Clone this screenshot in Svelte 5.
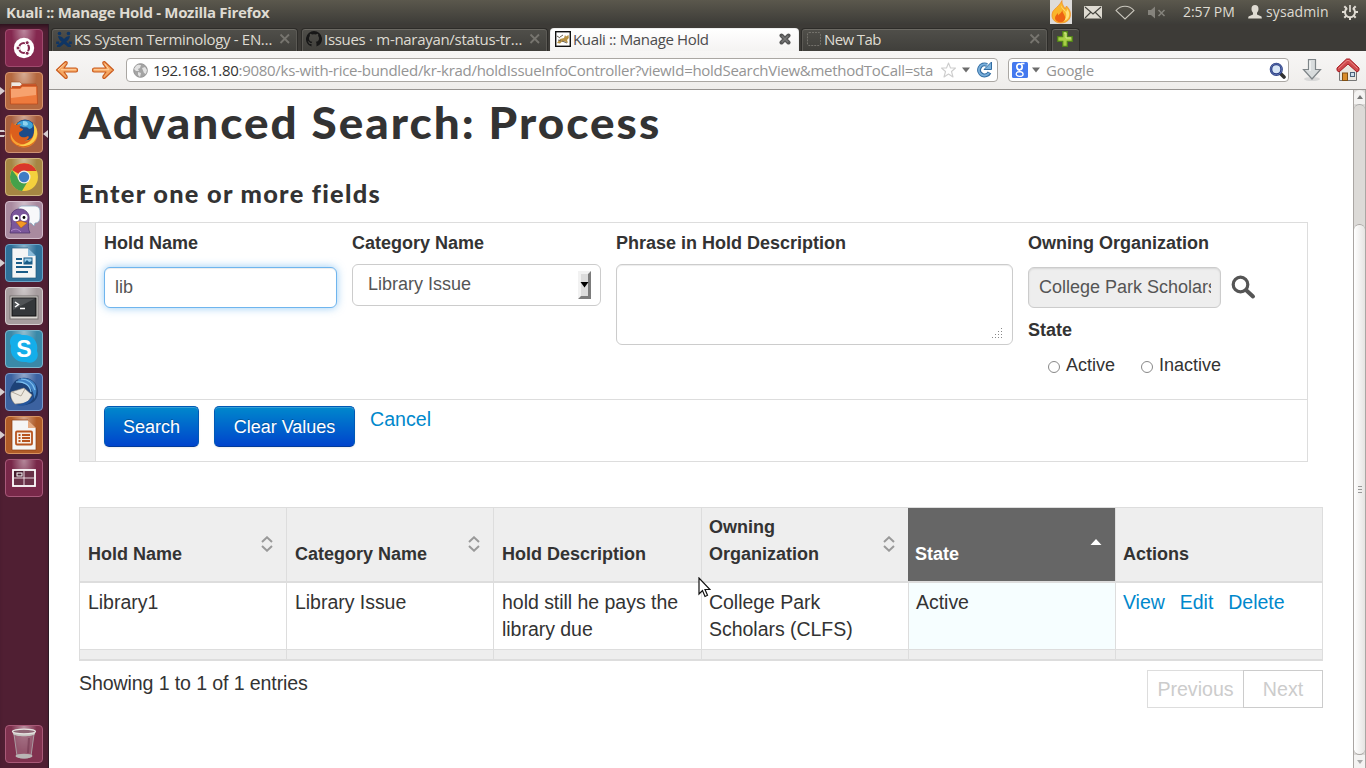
<script>
  const tabs = [
    { title: 'KS System Terminology - EN…', icon: 'jira', width: 247, spacing: -0.32 },
    { title: 'Issues · m-narayan/status-tr…', icon: 'github', width: 247, spacing: -0.3 },
    { title: 'Kuali :: Manage Hold', icon: 'kuali', width: 249, spacing: -0.36, active: true },
    { title: 'New Tab', icon: 'blank', width: 247, spacing: -0.6 }
  ];
  const apps = [
    { name: 'dash', tint: '#84284f', edge: '#a04a6e' },
    { name: 'files', tint: '#b5683f', edge: '#d79670', running: 1 },
    { name: 'firefox', tint: '#a9603f', edge: '#cf9373', running: 2, focused: true },
    { name: 'chrome', tint: '#a68643', edge: '#ceb47c' },
    { name: 'pidgin', tint: '#a98a9f', edge: '#d3bccb' },
    { name: 'writer', tint: '#2f7099', edge: '#6ba4c6', running: 1 },
    { name: 'terminal', tint: '#a79d9f', edge: '#d5cdcf' },
    { name: 'skype', tint: '#3a89a8', edge: '#7db7cd' },
    { name: 'thunderbird', tint: '#3c62a0', edge: '#7c9ccc', running: 1 },
    { name: 'impress', tint: '#b05b27', edge: '#d79360', running: 1 },
    { name: 'workspaces', tint: '#782849', edge: '#a8597a' },
    { name: 'trash', tint: '#80324f', edge: '#a95a78' }
  ];
  const columns = [
    { label: 'Hold Name', sort: true },
    { label: 'Category Name', sort: true },
    { label: 'Hold Description' },
    { label: 'Owning Organization', sort: true, tight: true },
    { label: 'State', sorted: true, tight: true },
    { label: 'Actions', tight: true }
  ];
</script>

<div class="screen">
  <header class="panel">
    <span class="title">Kuali :: Manage Hold - Mozilla Firefox</span>
    <div class="tray">
      <svg class="flame" width="22" height="24" viewBox="0 0 22 24">
        <rect width="22" height="24" fill="#dedcda" />
        <path d="M12 .5c-.5 4 2 5.500 3 8.500l1.500-3C19.500 9 20.500 11.500 20.500 14.500c0 5-4 8.500-9.500 8.500S1.500 19.500 2 14.500C2.400 10 6 8.500 8.500 5.500 10 4 11 2.500 12 .5z" fill="#f9b62d" stroke="#f08a21" stroke-width=".7" />
        <path d="M11 5c-1 3 4 5 5 8 .7 3 0 6-2.500 8 5-1 6.500-5 5.500-9l-1.500-3-1.500 3C15 9 11.500 8 11 5z" fill="#ffe07a" />
        <path d="M12.500 10c-.5 3 2.700 4.500 2.700 8 0 2.500-2 4.300-4.700 4.300S5 20.500 5 18c0-2.500 1.800-3.500 3-5v2.500c1.500-1.500 3.500-3 4.500-5.500z" fill="#ee6413" />
      </svg>
      <svg class="mail" width="18" height="13" viewBox="0 0 18 13"><rect width="18" height="12.500" rx=".8" fill="#dfdbd2" /><path d="M1 1l8 7 8-7M1 12l6-6M17 12l-6-6" fill="none" stroke="#45443e" stroke-width="1.100" /></svg>
      <svg class="wifi" width="20" height="15" viewBox="0 0 20 15"><path d="M1 5.500C6-.2 14-.2 19 5.500L10 14z" fill="none" stroke="#c9c6bd" stroke-width="1.100" /></svg>
      <svg class="mute" width="18" height="13" viewBox="0 0 18 13"><path d="M0 4h3l4-3.500v12L3 9H0z" fill="#85837c" /><path d="M10.500 4l6 6M16.500 4l-6 6" stroke="#85837c" stroke-width="1.500" /></svg>
      <span class="clock">2:57 PM</span>
      <svg class="user" width="14" height="14" viewBox="0 0 14 14"><path d="M7 0c2.300 0 3.500 1.500 3.500 4 0 1.700-.8 3-1.500 3.800V9.500l4 1.700c.6.300.8 1 .8 2.300H.2c0-1.300.2-2 .8-2.300l4-1.700V7.800C4.300 7 3.500 5.700 3.500 4 3.500 1.500 4.700 0 7 0z" fill="#dfdbd2" /></svg>
      <span class="username">sysadmin</span>
      <svg class="gear" width="16" height="16" viewBox="0 0 16 16" fill="none" stroke="#dfdbd2"><path d="M5.200 4.200a5 5 0 1 0 5.600 0" stroke-width="2" /><path d="M8 1v7" stroke-width="1.700" /><path d="M0 8h3M13 8h3M8 13v3M2.300 2.300l2.200 2.200M13.700 2.300l-2.200 2.200M2.300 13.700l2.200-2.200M13.700 13.700l-2.200-2.200" stroke-width="2" /></svg>
    </div>
  </header>

  <div class="desktop">
    <aside class="launcher">
      {#each apps as app}
        <div class="slot" class:last={app.name === 'trash'}>
          {#if app.running === 1}<svg class="pip" width="5" height="8" viewBox="0 0 5 8"><path d="M0 0l5 4-5 4z" fill="#d6cdd0" /></svg>{/if}
          {#if app.running === 2}<svg class="pip" width="5" height="8" viewBox="0 0 5 8"><path d="M0 0h4l1 2H0zM0 5h5l-1 2H0z" fill="#d6cdd0" /></svg>{/if}
          {#if app.focused}<svg class="pip focus" width="5" height="8" viewBox="0 0 5 8"><path d="M5 0L0 4l5 4z" fill="#d6cdd0" /></svg>{/if}
          <div class="tile" style="background-color:{app.tint};border-color:{app.edge}">
            <svg width="36" height="36" viewBox="0 0 36 36">
              {#if app.name === 'dash'}
                <circle cx="18" cy="18" r="10.200" fill="#fff" /><circle cx="18" cy="18" r="5" fill="none" stroke="#84284f" stroke-width="2.200" />
                <g fill="#84284f" stroke="#fff" stroke-width="1"><circle cx="12" cy="18" r="2" /><circle cx="21.200" cy="12.700" r="2" /><circle cx="21.200" cy="23.300" r="2" /></g>
              {:else if app.name === 'files'}
                <path d="M5 30V9h9l2 2h14v19z" fill="#eee9e3" stroke="#a34e20" stroke-width=".6" />
                <path d="M6 13h8l2-2h14v4H6z" fill="#c9562a" />
                <path d="M4 15h10l2-2h15l.5 18H4.500z" fill="#ee7a3d" stroke="#b9481b" stroke-width=".7" /><path d="M5 16h9.500l2-2H30v8L5 25z" fill="#f7a26f" />
              {:else if app.name === 'firefox'}
                <circle cx="18" cy="18" r="13.500" fill="#ee8a24" /><circle cx="19" cy="14" r="10.500" fill="#1d4b88" />
                <path d="M11 8c3-4 11-5 15-1 2 3 0 6-3 6-2-3-5-1-6-2s-4 0-6-3z" fill="#3fa3d8" /><path d="M17 5c3 0 5 1 5 3s-3 2-5 1z" fill="#8fd3ef" />
                <path d="M6 6c1 2 2 3 4 3 2 0 3-1 5-1-2 2-2 4 2 5 0 2-3 2-4 4 0 5 6 5 9 3 2 1 0 4-4 5 6 1 10-4 10-11l3 4c-1 8-6 13-13 13C8 31 2 24 4 15c0-3 1-6 2-9z" fill="#dc5f1c" />
                <path d="M27 7c6 6 6 16-2 21-5 3-12 3-16-1 9 4 18-1 19-10 .4-4 0-7-1-10z" fill="#fbcf4a" /><path d="M5 17c1 7 7 12 14 11-8 4-16-3-14-11z" fill="#f6a234" />
              {:else if app.name === 'chrome'}
                <circle cx="18" cy="18" r="14" fill="#f4d13d" /><path d="M18 18L6 11A14 14 0 0 1 30.500 12L18 12z" fill="#d9372c" /><path d="M18 18L13 20 6 11a14 14 0 0 0 10 21l6-10z" fill="#45a14a" />
                <circle cx="18" cy="18" r="6.500" fill="#f2f0ea" /><circle cx="18" cy="18" r="5.200" fill="#3e7cc4" />
              {:else if app.name === 'pidgin'}
                <path d="M17 4h11c4 0 6 2 6 6v5c0 4-2 6-5 6l-1 3-3-3h-8c-4 0-5-2-5-6v-5c0-4 1-6 5-6z" fill="#f7f8fa" stroke="#8cabc4" stroke-width=".8" />
                <path d="M4 31c1-5 2-8 1-13C4 11 8 7 14 7s10 5 9 11c-1 5-1 9 1 13z" fill="#7b579b" stroke="#51356d" stroke-width=".8" />
                <circle cx="10" cy="16" r="3.200" fill="#fff" /><circle cx="18" cy="15.500" r="3.500" fill="#fff" /><circle cx="10.500" cy="16" r="1.300" /><circle cx="18" cy="15.500" r="1.400" />
                <path d="M10 20l5-1 6 2-6 5z" fill="#f39a25" stroke="#ae5a0b" stroke-width=".5" /><path d="M5 29c4-3 7-2 10 1" stroke="#b48dcc" fill="none" />
              {:else if app.name === 'writer'}
                <path d="M6 3h16l8 8v22H6z" fill="#f5f5f5" stroke="#235a7e" stroke-width=".7" /><path d="M22 3v8h8z" fill="#8cbcdb" />
                <path d="M10 14h6M10 18h6M10 22h16M10 27h12" stroke="#1b5c87" stroke-width="2" /><rect x="18" y="13" width="8" height="6" fill="#9ed0ea" stroke="#1b5c87" /><path d="M18 18l3-3 2 2 3-1v3h-8z" fill="#1b5c87" />
              {:else if app.name === 'terminal'}
                <rect x="4" y="8" width="28" height="23" fill="#ddd9d5" stroke="#767271" /><rect x="6" y="10" width="24" height="18" fill="#34373a" stroke="#111" /><path d="M7 10.500h22L7 22z" fill="#505356" /><path d="M9 14l3.500 2.500L9 19M14 20.500h5" fill="none" stroke="#fff" stroke-width="1.500" />
              {:else if app.name === 'skype'}
                <path d="M11 3a8 8 0 0 1 5 1c10-1 17 6 15 16 3 7-3 14-11 11C11 32 3 25 5 15 2 9 6 3 11 3z" fill="#14aeea" /><text x="18" y="26" text-anchor="middle" font-family="Liberation Sans, sans-serif" font-size="23" font-weight="700" fill="#fff">S</text>
              {:else if app.name === 'thunderbird'}
                <path d="M9 7c6-5 15-4 20 2 6 8 3 19-6 21-7 3-16 0-19-6-2-6 1-12 5-17z" fill="#1d4278" /><path d="M11 6c7-4 15-1 18 4 2 4 2 10-1 15 0-8-4-14-12-16z" fill="#3f80c4" /><path d="M10 8c8-1 14 3 15 10M15 5c7 0 12 4 14 11" stroke="#7ec0ef" fill="none" stroke-width="1.200" />
                <path d="M5 18l13-4 8 7-5 8-12 1c-3-3-5-7-4-12z" fill="#ece8e0" stroke="#908a83" stroke-width=".6" /><path d="M6 18l9 4 4-7" fill="none" stroke="#b1a99c" /><path d="M10 31c6 2 13 0 17-6l1-5c-2 5-8 9-18 11z" fill="#24559c" />
              {:else if app.name === 'impress'}
                <path d="M6 3h16l8 8v22H6z" fill="#f5f5f5" stroke="#8c3e12" stroke-width=".7" /><path d="M22 3v8h8z" fill="#e6ac84" /><rect x="10" y="14.500" width="16" height="13" rx="1" fill="#f6ede5" stroke="#b7541f" stroke-width="1.800" />
                <path d="M12.500 18h2M16 18h8M12.500 21h2M16 21h8M12.500 24h2M16 24h8" stroke="#b7541f" stroke-width="1.800" />
              {:else if app.name === 'workspaces'}
                <rect x="7" y="10" width="22" height="16" fill="#693248" stroke="#fff" stroke-width="1.800" /><path d="M18 10v16M7 18h22" stroke="#f4e7ed" stroke-width=".9" /><path d="M8 11h9v6H8z" fill="#461c2e" /><rect x="11" y="13" width="5" height="3" fill="none" stroke="#fff" stroke-width="1" />
              {:else}
                <path d="M8 8l3 22c2 3 12 3 14 0L28 8z" fill="#a47487" fill-opacity=".55" stroke="#a99ba1" /><ellipse cx="18" cy="30" rx="8.500" ry="2.300" fill="#b9b6b5" /><path d="M7 5h22v3c-2 3-20 3-22 0z" fill="#c6c4c1" /><ellipse cx="18" cy="5.500" rx="11.500" ry="2.300" fill="#8e6675" stroke="#e6e5e2" stroke-width="1.300" /><path d="M23 12l-1 15" stroke="#6b3149" stroke-width="2" opacity=".5" />
              {/if}
            </svg>
          </div>
        </div>
      {/each}
    </aside>

    <main class="browser">
      <nav class="tabs">
        {#each tabs as tab}
          <div class="tab" class:active={tab.active} style="width:{tab.width}px">
            <svg class="favicon" width="16" height="16" viewBox="0 0 16 16">
              {#if tab.icon === 'jira'}
                <g fill="#0f3564"><circle cx="3.500" cy="2.500" r="1.800" /><circle cx="12.500" cy="2.500" r="1.800" /><path d="M2 5c2.500 0 4.500 1 6 3 1.500-2 3.500-3 6-3-.5 3-2 4.500-3.700 5.700L15 14.500V16h-3L8 12.700 4 16H1v-1.500l4.700-3.800C4 9.500 2.500 8 2 5z" /><path d="M.2 10.500h3V13h-3zM12.800 10.500h3V13h-3z" /></g>
              {:else if tab.icon === 'github'}
                <path d="M8 0a8 8 0 0 0-2.500 15.600V13c-2 .4-2.600-.6-3-1.600-.4-.7-.8-1-.8-1 1.300-.5 1.900 1.600 3 1.600h1c.1-.6.300-1 .6-1.200C3.800 10.500 3 9.500 3 7.200c0-1 .3-1.700.9-2.300-.2-.8-.1-1.500.1-2.200.8 0 1.500.4 2.100.8a7 7 0 0 1 3.800 0c.6-.4 1.300-.8 2.100-.8.3.7.300 1.400.1 2.200.6.600.9 1.300.9 2.300 0 2.300-1 3.300-3.300 3.600.4.400.8 1 .8 2v2.800A8 8 0 0 0 8 0z" fill="#171717" />
              {:else if tab.icon === 'kuali'}
                <rect x=".7" y=".7" width="14.600" height="14.600" fill="#fff" stroke="#111" stroke-width="1.400" /><path d="M2 12l3-4 4-1 1-3 1 1.500L13.500 4l.3 3-1.800 2 1 3-3-1.500L6.500 11 5 12.500z" fill="#b99345" /><path d="M2 5l3 2M8 4L5 6M3 9l3 1M7 10l5 2" stroke="#6d665b" fill="none" />
              {:else}
                <rect x="1.500" y="1.500" width="13" height="13" rx="1.500" fill="none" stroke="#73716b" stroke-dasharray="2 1" />
              {/if}
            </svg>
            <span class="tabtitle" style="letter-spacing:{tab.spacing}px">{tab.title}</span>
            <svg class="close" width="12" height="12" viewBox="0 0 12 12">
              {#if tab.active}<path d="M2.500 2.500l7 7M9.500 2.500l-7 7" stroke="#555" stroke-width="4" stroke-linecap="round" /><path d="M2.700 2.700l6.600 6.600M9.300 2.700L2.700 9.300" stroke="#777" stroke-width="1.500" />{:else}<path d="M1.500 1.500l8.500 8.500M10 1.500L1.500 10" stroke="#77756f" stroke-width="1.800" />{/if}
            </svg>
          </div>
        {/each}
        <div class="newtab"><svg width="16" height="16" viewBox="0 0 16 16"><path d="M5.700.7h4.600v5h5v4.600h-5v5H5.700v-5h-5V5.700h5z" fill="#a8cf45" stroke="#51801b" stroke-width="1.300" /><path d="M7 2h2v5h5" fill="none" stroke="#d3e88c" /></svg></div>
      </nav>

      <div class="toolbar">
        <svg class="arrow" width="24" height="20" viewBox="0 0 24 20"><path d="M10.500 1.500c1.500 0 2 1 1.500 2.300L9 8h12c2 0 2 4 0 4H9l3 4.200c.5 1.300 0 2.300-1.500 2.300L1.500 10z" fill="#f5a762" stroke="#ca5a1d" stroke-width="1.200" stroke-linejoin="round" /><path d="M3 10l6.500-6M6 9.700h15" stroke="#ffd0a0" fill="none" /></svg>
        <svg class="arrow forward" width="24" height="20" viewBox="0 0 24 20"><path d="M13.500 1.500c-1.500 0-2 1-1.500 2.300L15 8H3c-2 0-2 4 0 4h12l-3 4.200c-.5 1.300 0 2.300 1.500 2.300l9-8.500z" fill="#f5a762" stroke="#ca5a1d" stroke-width="1.200" stroke-linejoin="round" /><path d="M3 9.700h15L14 4" stroke="#ffd0a0" fill="none" /></svg>
        <div class="field url">
          <svg width="15" height="15" viewBox="0 0 15 15"><circle cx="7.500" cy="7.500" r="6.800" fill="#a4a4a4" stroke="#949494" /><path d="M3 3c2-2 4-1 5-1l-1 3-2 1 1 2H3L1 6zM9 5l3-1 2 3-1 4-2-1zM5 9l3 1-1 4-2-2z" fill="#e2e2e2" /></svg>
          <span class="address"><b>192.168.1.80</b>:9080/ks-with-rice-bundled/kr-krad/holdIssueInfoController?viewId=holdSearchView&amp;methodToCall=sta</span>
          <svg class="star" width="17" height="17" viewBox="0 0 17 17"><path d="M8.500 1l2 5h5l-4 3.500 1.500 5.500-4.500-3L4 15l1.500-5.500-4-3.500h5z" fill="#fff" stroke="#cdcdcd" stroke-width="1.100" stroke-linejoin="round" /></svg>
          <svg class="drop" width="8" height="6" viewBox="0 0 8 6"><path d="M0 .5h8L4 5.500z" fill="#6c6c6c" /></svg>
          <svg width="17" height="16" viewBox="0 0 17 16"><path d="M13.500 10.500A5.500 5.500 0 1 1 11 3" fill="none" stroke="#326ca2" stroke-width="4" /><path d="M15.500 0v7.500H8z" fill="#7cb2dc" stroke="#326ca2" /><path d="M13 11A5.500 5.500 0 1 1 11 3" fill="none" stroke="#78aeda" stroke-width="2" /></svg>
        </div>
        <div class="field search">
          <svg width="16" height="16" viewBox="0 0 16 16"><rect width="16" height="16" rx="1.500" fill="#4479ef" /><g fill="none" stroke="#fff"><ellipse cx="7.500" cy="4.800" rx="2.700" ry="3" stroke-width="1.700" /><path d="M9 1.500h3.500M7.500 8c-1 1 .5 1.500 2 2M8 9.600c-5 0-5 4.700-.5 4.700 5 0 4.500-4.200.5-4.700z" stroke-width="1.300" /></g></svg>
          <svg class="drop" width="8" height="6" viewBox="0 0 8 6"><path d="M0 .5h8L4 5.500z" fill="#6c6c6c" /></svg>
          <span class="google">Google</span>
          <svg width="17" height="17" viewBox="0 0 17 17"><path d="M11 11l4 4" stroke="#333" stroke-width="3.600" stroke-linecap="round" /><circle cx="7.300" cy="7.300" r="5.300" fill="#d7e5f5" stroke="#263b83" stroke-width="2.600" /><circle cx="7.300" cy="7.300" r="5.500" fill="none" stroke="#7889be" stroke-width=".7" /></svg>
        </div>
        <svg class="download" width="20" height="24" viewBox="0 0 20 24"><ellipse cx="10" cy="21" rx="8" ry="2" fill="#d8d8d8" /><path d="M6.500 1.500h7v10h5L10 21l-8.500-9.500h5z" fill="#d8dcdd" stroke="#7e8588" stroke-width="1.200" /><path d="M8 3v10" stroke="#fff" /></svg>
        <svg class="home" width="24" height="24" viewBox="0 0 24 24"><path d="M3.500 12v10.500h17V12L12 5z" fill="#eae8e0" stroke="#777" /><path d="M1 12.500V10L10.500 1h3L23 10v2.500l-2 1.500-9-8-9 8z" fill="#d04a4c" stroke="#a61e25" /><path d="M2.500 10.500L11 2.500h2l8.500 8" stroke="#e98a86" fill="none" /><rect x="6.500" y="15" width="5" height="7.500" fill="#d98d2a" stroke="#805014" /><rect x="14.500" y="14.500" width="4" height="4" fill="#cbddeb" stroke="#4b6379" /></svg>
      </div>

      <div class="viewport">
        <section class="page">
          <h1>Advanced Search: Process</h1>
          <h2>Enter one or more fields</h2>

          <form class="criteria">
            <div class="gutter"></div>
            <div class="fields">
              <div class="fieldbox name"><strong>Hold Name</strong><div class="box text focus">lib</div></div>
              <div class="fieldbox category"><strong>Category Name</strong><div class="box select"><span>Library Issue</span><svg width="13" height="28" viewBox="0 0 13 28"><path d="M0 0h13v28H0z" fill="#7c7c7c" /><path d="M0 0h13l-3 3v22H3l-3 3z" fill="#f2f2f2" /><path d="M3 3h7v22H3z" fill="#dcdcdc" /><path d="M2.500 11h8l-4 5.500z" fill="#000" /></svg></div></div>
              <div class="fieldbox phrase"><strong>Phrase in Hold Description</strong><div class="box area"><svg width="10" height="10" viewBox="0 0 10 10"><path d="M9 0h1v1H9zM9 3h1v1H9zM6 3h1v1H6zM9 6h1v1H9zM6 6h1v1H6zM3 6h1v1H3zM9 9h1v1H9zM6 9h1v1H6zM3 9h1v1H3zM0 9h1v1H0z" fill="#888" /></svg></div></div>
              <div class="fieldbox owner">
                <strong>Owning Organization</strong>
                <div class="lookup"><div class="box text readonly"><span>College Park Scholars</span></div><svg width="25" height="25" viewBox="0 0 25 25"><circle cx="9.500" cy="9.500" r="7.300" fill="none" stroke="#555" stroke-width="3.200" /><path d="M15.500 15.500l6.500 6" stroke="#555" stroke-width="4" stroke-linecap="round" /></svg></div>
                <strong class="statelabel">State</strong>
                <div class="radios"><i></i><span>Active</span><i></i><span>Inactive</span></div>
              </div>
            </div>
            <div class="gutter second"></div>
            <div class="buttons"><span class="btn">Search</span><span class="btn clear">Clear Values</span><span class="link">Cancel</span></div>
          </form>

          <div class="results">
            {#each columns as col}
              <div class="th" class:sorted={col.sorted} class:tight={col.tight}>
                <strong>{col.label}</strong>
                {#if col.sort}<svg width="12" height="16" viewBox="0 0 12 16"><path d="M1 6l5-4.700L11 6M1 10l5 4.700L11 10" fill="none" stroke="#999" stroke-width="2" /></svg>{/if}
                {#if col.sorted}<svg width="12" height="16" viewBox="0 0 12 16"><path d="M.5 9L6 3l5.500 6z" fill="#fff" /></svg>{/if}
              </div>
            {/each}
            <div class="td">Library1</div>
            <div class="td">Library Issue</div>
            <div class="td">hold still he pays the library due</div>
            <div class="td tight">College Park Scholars (CLFS)</div>
            <div class="td tight tinted">Active</div>
            <div class="td tight actions"><span>View</span><span>Edit</span><span>Delete</span></div>
            {#each columns as col}<div class="tf"></div>{/each}
          </div>

          <div class="summary">
            <span class="count">Showing 1 to 1 of 1 entries</span>
            <div class="pager"><span class="prev">Previous</span><span class="next">Next</span></div>
          </div>
        </section>

        <div class="scrollbar">
          <div class="up"><svg width="6" height="4" viewBox="0 0 6 4"><path d="M0 4l3-4 3 4z" fill="#777" /></svg></div>
          <div class="trough"></div>
          <div class="thumb"><i></i><i></i><i></i></div>
          <div class="down"><svg width="6" height="4" viewBox="0 0 6 4"><path d="M0 0l3 4 3-4z" fill="#aaa" /></svg></div>
        </div>
      </div>
    </main>
  </div>

  <svg class="pointer" width="13" height="21" viewBox="0 0 13 21"><path d="M1 1v16l3.500-3.500L7 19.500l2.500-1.200L7 12.500h5z" fill="#fff" stroke="#111" stroke-width="1.200" /></svg>
</div>

<style>
  :global(body) { margin: 0; overflow: hidden; }
  .screen { position: relative; width: 1366px; height: 768px; overflow: hidden; background: #fff; font-family: "Liberation Sans", sans-serif; color: #333; }
  .screen *, .screen { box-sizing: border-box; }
  svg { display: block; flex: none; }
  .panel { height: 24px; display: flex; align-items: center; justify-content: space-between; background: linear-gradient(#5b584d, #3d3c38); color: #dfdbd2; font: 15px/24px "Open Sans", sans-serif; white-space: nowrap; }
  .title { padding-left: 6px; font-weight: 700; font-size: 15px; letter-spacing: -0.3px; }
  .tray { display: flex; align-items: center; width: 316px; }
  .mail { margin-left: 12px; }
  .wifi { margin-left: 13px; }
  .mute { margin-left: 13px; }
  .clock { width: 65px; margin-left: 17px; font-size: 14px; letter-spacing: -0.1px; }
  .username { width: 72px; margin-left: 4px; font-size: 14px; letter-spacing: 0.1px; }
  .gear { margin-left: 4px; }

  .desktop { display: flex; height: 744px; }
  .launcher { width: 49px; flex: none; display: flex; flex-direction: column; gap: 5px; padding: 5px 0; background: #501f33; border-right: 1px solid #2d1b26; box-shadow: inset 0 5px 5px -3px #261019; }
  .slot { position: relative; height: 38px; padding-left: 5px; }
  .last { margin-top: auto; }
  .tile { width: 38px; height: 38px; border: 1px solid; border-radius: 4px; background-image: radial-gradient(ellipse at 50% 0, rgba(255,255,255,.45), rgba(255,255,255,0) 50%); }
  .pip { position: absolute; left: 0; top: 15px; }
  .focus.pip { left: 43px; }

  .browser { width: 1317px; display: flex; flex-direction: column; }
  .tabs { height: 27px; display: flex; padding: 4px 0 0 2px; gap: 3px; background: #3d3b37; }
  .tab { height: 23px; flex: none; display: flex; align-items: center; padding: 0 6px 2px 4px; border: 1px solid #2d2c29; border-bottom: 0; border-radius: 4px 4px 0 0; background: linear-gradient(#504f4a, #403f3b); box-shadow: inset 0 1px #6b6963, inset 1px 0 #5b5954, inset -1px 0 #5b5954; color: #dfdbd2; font: 15px/20px "Open Sans", sans-serif; white-space: nowrap; }
  .tab.active { padding-right: 7px; background: linear-gradient(#fff, #f4f3f2); color: #4c4c4c; box-shadow: none; border-color: #eee; margin: 0 -1px; }
  .tabtitle { flex: 1; padding-left: 2px; overflow: hidden; }
  .newtab { width: 29px; margin-left: 0; padding: 2px 0 0 5px; border: 1px solid #2d2c29; border-bottom: 0; border-radius: 4px 4px 0 0; background: #45443f; box-shadow: inset 0 1px #6b6963, inset 1px 0 #5b5954; }
  .toolbar { height: 39px; display: flex; align-items: center; background: linear-gradient(#f7f6f5, #efedeb); border-bottom: 1px solid #979491; padding-left: 6px; }
  .forward { margin-left: 12px; }
  .field { height: 24px; display: flex; align-items: center; background: #fff; border: 1px solid #aaa7a3; border-radius: 4px; font: 15px/22px "Open Sans", sans-serif; color: #949494; }
  .url { width: 872px; margin-left: 11px; padding-left: 6px; white-space: nowrap; }
  .url b { color: #333; font-weight: 400; }
  .address { width: 787px; margin-left: 5px; overflow: hidden; letter-spacing: -0.29px; }
  .url .star { margin: 0 5px 0 0; }
  .url .drop { margin-right: 6px; }
  .search { width: 281px; margin-left: 10px; padding: 0 2px 0 3px; }
  .search .drop { margin-left: 4px; }
  .google { flex: 1; padding-left: 6px; letter-spacing: -0.25px; }
  .download { margin-left: 13px; }
  .home { margin-left: 14px; }

  .viewport { height: 678px; display: flex; background: #fff; }
  .page { width: 1304px; padding-left: 30px; }
  h1, h2 { margin: 0; font-family: Lato, sans-serif; font-weight: 900; white-space: nowrap; transform-origin: 0 0; }
  h1 { height: 86px; font-size: 43px; line-height: 66px; letter-spacing: 1.900px; transform: scaleX(1.065); }
  h2 { height: 46px; font-size: 24px; line-height: 35px; letter-spacing: 1.200px; transform: scaleX(1.057); }
  .criteria { width: 1229px; height: 240px; display: grid; grid-template-columns: 16px 1fr; grid-template-rows: 176px 1fr; border: 1px solid #ddd; font-size: 18px; }
  .gutter { background: #eee; border-right: 1px solid #ddd; }
  .second, .buttons { border-top: 1px solid #ddd; }
  .fields { display: flex; gap: 15px; padding: 10px 0 0 8px; }
  strong { display: block; font-size: 18px; line-height: 20px; white-space: nowrap; }
  .name { width: 233px; }
  .category { width: 249px; }
  .phrase { width: 397px; }
  .box { height: 42px; margin-top: 11px; border: 1px solid #ccc; border-radius: 6px; background: #fff; color: #555; line-height: 38px; }
  .text { height: 41px; margin-top: 14px; padding: 0 10px; box-shadow: inset 0 1px 1px rgba(0,0,0,.075); white-space: nowrap; }
  .text.focus { border-color: #6fb5ee; box-shadow: 0 0 8px rgba(82,168,236,.6), inset 0 1px 1px rgba(0,0,0,.075); }
  .select { display: flex; padding-left: 15px; }
  .select span { flex: 1; }
  .select svg { margin: 6px 9px 0 0; }
  .area { height: 81px; display: flex; justify-content: flex-end; align-items: flex-end; padding: 0 10px 6px; box-shadow: inset 0 1px 1px rgba(0,0,0,.075); }
  .lookup { display: flex; align-items: center; gap: 10px; height: 41px; margin-top: 14px; }
  .readonly { width: 193px; margin: 0; background: #eee; box-shadow: inset 0 1px 2px rgba(0,0,0,.1); }
  .readonly span { display: block; overflow: hidden; width: 172px; }
  .statelabel { margin-top: 12px; }
  .radios { display: flex; align-items: center; height: 26px; margin: 13px 0 0 20px; line-height: 20px; }
  .radios i { width: 12px; height: 12px; margin-top: 2px; border: 1px solid #888; border-radius: 50%; background: #fff; }
  .radios span { padding-left: 6px; margin-bottom: 2px; width: 81px; }
  .buttons { display: flex; align-items: flex-start; padding: 6px 0 0 8px; }
  .btn { width: 95px; height: 41px; border: 1px solid #0059b5; border-bottom-color: #003a9a; border-radius: 5px; background: linear-gradient(#08c, #04c); box-shadow: inset 0 1px rgba(255,255,255,.2), 0 1px 2px rgba(0,0,0,.08); color: #fff; line-height: 40px; text-align: center; text-shadow: 0 -1px rgba(0,0,0,.25); }
  .clear { width: 141px; margin: 0 15px; }
  .link { color: #08c; font-size: 19.600px; line-height: 26px; }

  .results { width: 1244px; display: grid; grid-template-columns: 208px 207px 208px 207px 207px 207px; grid-template-rows: 75px 66px 12px; margin-top: 45px; border-top: 1px solid #ddd; }
  .th, .td, .tf { border-right: 1px solid #ddd; }
  .th:nth-child(6n + 1), .td:nth-child(6n + 1), .tf:nth-child(6n + 1) { border-left: 1px solid #ddd; }
  .th { display: flex; align-items: flex-end; justify-content: space-between; padding: 0 13px 13px 8px; background: #eee; border-bottom: 2px solid #ddd; }
  .th strong { line-height: 27px; max-width: 150px; white-space: normal; }
  .th svg { margin: 0 0 16px; }
  .th.sorted { background: #666; color: #fff; margin-left: -1px; }
  .td { padding: 6px 8px 0; font-size: 19.500px; line-height: 27px; letter-spacing: -0.03px; }
  .th.tight, .td.tight { padding-left: 7px; }
  .tinted { background: #f6feff; }
  .actions { display: flex; gap: 15px; color: #08c; }
  .tf { background: #eee; border-top: 1px solid #ddd; border-bottom: 2px solid #ddd; }
  .summary { width: 1244px; display: flex; justify-content: space-between; align-items: flex-start; padding-top: 9px; font-size: 19.600px; line-height: 26px; }
  .count { letter-spacing: -0.12px; }
  .pager { display: flex; height: 38px; line-height: 36px; color: #ccc; text-align: center; }
  .prev { width: 96px; border: 1px solid #ddd; border-right: 0; }
  .next { width: 80px; border: 1px solid #ccc; }
  .scrollbar { width: 13px; height: 678px; display: flex; flex-direction: column; background: #dcdad8; border: 1px solid #aaa6a3; border-top: 0; border-bottom: 0; }
  .up, .down { height: 13px; display: flex; align-items: center; justify-content: center; background: #f4f3f2; }
  .up { height: 14px; border-radius: 6px 6px 0 0; }
  .trough { height: 120px; background: #dcdad7; border-top: 1px solid #aaa; border-radius: 6px 6px 0 0; }
  .thumb { height: 531px; display: flex; flex-direction: column; align-items: center; justify-content: center; gap: 2px; border: 1px solid #aaa6a3; border-width: 1px 0; border-radius: 6px; background: linear-gradient(90deg, #fff, #e6e4e2); }
  .thumb i { width: 4px; height: 1px; background: #999; }
  .pointer { position: absolute; left: 698px; top: 577px; }
</style>
